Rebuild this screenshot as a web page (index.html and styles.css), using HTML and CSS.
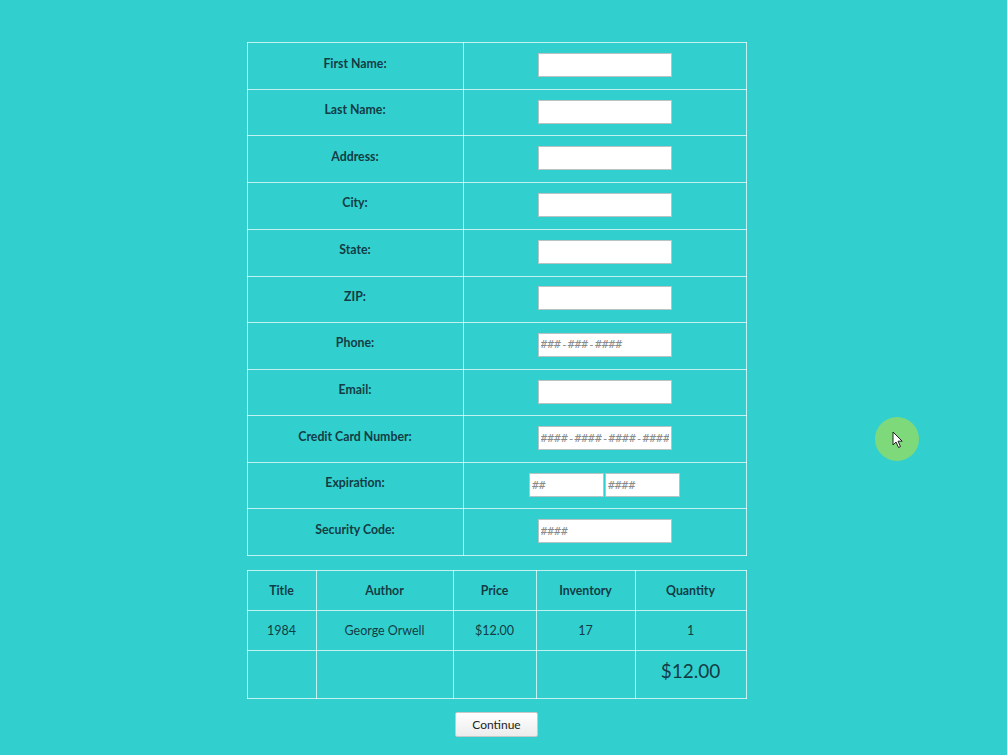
FILE: index.html
```html
<!DOCTYPE html>
<html lang="en">
<head>
<meta charset="utf-8">
<title>Checkout</title>
<link rel="stylesheet" href="styles.css">
</head>
<body>
<div class="page">
  <table class="form-table">
    <tr><td class="label">First Name:</td><td class="field"><input class="inp" type="text"></td></tr>
    <tr><td class="label">Last Name:</td><td class="field"><input class="inp" type="text"></td></tr>
    <tr><td class="label">Address:</td><td class="field"><input class="inp" type="text"></td></tr>
    <tr><td class="label">City:</td><td class="field"><input class="inp" type="text"></td></tr>
    <tr><td class="label">State:</td><td class="field"><input class="inp" type="text"></td></tr>
    <tr><td class="label">ZIP:</td><td class="field"><input class="inp" type="text"></td></tr>
    <tr><td class="label">Phone:</td><td class="field"><input class="inp" type="text" placeholder="###-###-####"></td></tr>
    <tr><td class="label">Email:</td><td class="field"><input class="inp" type="text"></td></tr>
    <tr><td class="label">Credit Card Number:</td><td class="field"><input class="inp" type="text" placeholder="####-####-####-####"></td></tr>
    <tr><td class="label">Expiration:</td><td class="field"><span class="exp"><input class="inp small" type="text" placeholder="##"><input class="inp small" type="text" placeholder="####"></span></td></tr>
    <tr><td class="label">Security Code:</td><td class="field"><input class="inp" type="text" placeholder="####"></td></tr>
  </table>

  <table class="cart">
    <tr class="head"><th class="c1">Title</th><th class="c2">Author</th><th class="c3">Price</th><th class="c4">Inventory</th><th class="c5">Quantity</th></tr>
    <tr class="row"><td>1984</td><td>George Orwell</td><td>$12.00</td><td>17</td><td>1</td></tr>
    <tr class="total"><td></td><td></td><td></td><td></td><td class="sum">$12.00</td></tr>
  </table>

  <div class="actions"><button class="btn" type="button">Continue</button></div>
</div>

<div class="cursor-ring">
  <svg class="cursor" width="12" height="18" viewBox="0 0 12 18"><path d="M1 1 L1 14 L4 11 L6.5 16.5 L8.5 15.6 L6 10.2 L10.2 10.2 Z" fill="#fff" stroke="#222" stroke-width="1" stroke-linejoin="round"/></svg>
</div>
</body>
</html>
```

FILE: styles.css
```css
html, body {
  margin: 0;
  padding: 0;
}
body {
  background: #31d0cf;
  font-family: Lato, "Open Sans", sans-serif;
  color: #143c44;
  height: 755px;
  overflow: hidden;
}
.page {
  width: 993px;
  padding-top: 42px;
}
table {
  border-collapse: collapse;
  margin: 0 auto;
  width: 500px;
}
td, th {
  border: 1px solid rgba(255, 255, 255, 0.7);
  padding: 0;
  text-align: center;
}
.form-table tr:nth-child(odd) td { height: 40px; }
.form-table tr:nth-child(even) td { height: 39.3px; }
.form-table td {
  padding-bottom: 6px;
}
.form-table td.field {
  padding-bottom: 4px;
  padding-top: 2px;
}
.label {
  width: 215px;
  font-size: 12.3px;
  font-weight: 700;
  vertical-align: middle;
}
.field {
  vertical-align: middle;
}
.inp {
  box-sizing: border-box;
  width: 134px;
  height: 24px;
  border: 1px solid #b8c4c4;
  background: #fff;
  margin: 0;
  padding: 0 2px;
  font-family: "DejaVu Sans Mono", "Liberation Mono", monospace;
  font-size: 11.3px;
  color: #333;
  outline: none;
  vertical-align: middle;
}
.inp::placeholder {
  color: #8a8a8a;
}
.exp {
  display: inline-flex;
  gap: 1px;
}
.inp.small {
  width: 75px;
}
.cart {
  margin-top: 14px;
}
.cart th {
  font-size: 12.3px;
  font-weight: 700;
  height: 39px;
}
.cart .row td {
  font-size: 12.5px;
  height: 39px;
}
.cart .total td {
  height: 39px;
  padding-bottom: 8px;
}
.cart .sum {
  font-size: 19px;
}
.c1 { width: 68px; }
.c2 { width: 136px; }
.c3 { width: 82px; }
.c4 { width: 98px; }
.actions {
  display: flex;
  justify-content: center;
  margin-top: 13px;
}
.btn {
  width: 83px;
  height: 25px;
  background: linear-gradient(#ffffff, #ececec);
  border: 1px solid #c8c8c8;
  border-radius: 2px;
  font-family: Lato, "Open Sans", sans-serif;
  font-size: 12px;
  color: #222;
  padding: 0;
}
.cursor-ring {
  position: absolute;
  left: 875px;
  top: 417px;
  width: 44px;
  height: 44px;
  border-radius: 50%;
  background: #7ed97b;
}
.cursor {
  position: absolute;
  left: 17px;
  top: 14px;
}
```
